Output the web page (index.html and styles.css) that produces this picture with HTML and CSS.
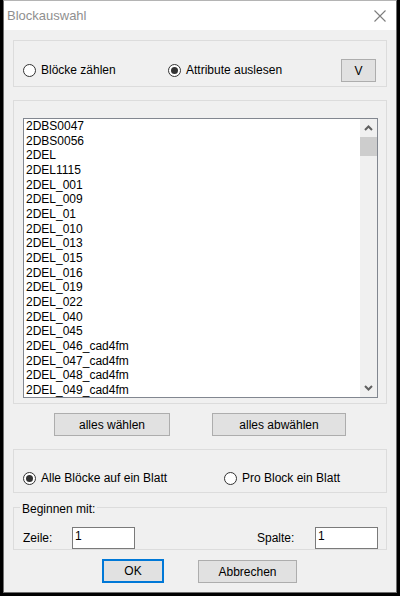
FILE: index.html
```html
<!DOCTYPE html>
<html lang="de">
<head>
<meta charset="utf-8">
<title>Blockauswahl</title>
<link rel="stylesheet" href="styles.css">
</head>
<body>
<div class="window">
  <div class="titlebar">
    <span class="title">Blockauswahl</span>
    <svg class="close" width="12" height="12" viewBox="0 0 12 12"><path d="M0.5 0.5 L11.5 11.5 M11.5 0.5 L0.5 11.5" stroke="#7d7d7d" stroke-width="1.1" fill="none"/></svg>
  </div>
  <div class="content">
    <div class="group g1">
      <label class="radio"><span class="circle"></span>Blöcke zählen</label>
      <label class="radio"><span class="circle checked"></span>Attribute auslesen</label>
      <button class="btn btn-v">V</button>
    </div>
    <div class="group g2">
      <div class="listbox">
        <ul class="items">
          <li>2DBS0047</li>
          <li>2DBS0056</li>
          <li>2DEL</li>
          <li>2DEL1115</li>
          <li>2DEL_001</li>
          <li>2DEL_009</li>
          <li>2DEL_01</li>
          <li>2DEL_010</li>
          <li>2DEL_013</li>
          <li>2DEL_015</li>
          <li>2DEL_016</li>
          <li>2DEL_019</li>
          <li>2DEL_022</li>
          <li>2DEL_040</li>
          <li>2DEL_045</li>
          <li>2DEL_046_cad4fm</li>
          <li>2DEL_047_cad4fm</li>
          <li>2DEL_048_cad4fm</li>
          <li>2DEL_049_cad4fm</li>
        </ul>
        <div class="scrollbar">
          <div class="sb-btn"><svg width="9" height="6" viewBox="0 0 9 6"><path d="M1 5 L4.5 1.5 L8 5" stroke="#606060" stroke-width="2" fill="none"/></svg></div>
          <div class="thumb"></div>
          <div class="track"></div>
          <div class="sb-btn"><svg width="9" height="6" viewBox="0 0 9 6"><path d="M1 1 L4.5 4.5 L8 1" stroke="#606060" stroke-width="2" fill="none"/></svg></div>
        </div>
      </div>
    </div>
    <div class="btnrow">
      <button class="btn btn-all">alles wählen</button>
      <button class="btn btn-none">alles abwählen</button>
    </div>
    <div class="group g3">
      <label class="radio r-all"><span class="circle checked"></span>Alle Blöcke auf ein Blatt</label>
      <label class="radio"><span class="circle"></span>Pro Block ein Blatt</label>
    </div>
    <fieldset class="group g4">
      <legend>Beginnen mit:</legend>
      <div class="fields">
        <span class="lbl lbl-zeile">Zeile:</span>
        <input class="txt" type="text" value="1">
        <span class="spacer"></span>
        <span class="lbl lbl-spalte">Spalte:</span>
        <input class="txt" type="text" value="1">
      </div>
    </fieldset>
    <div class="dlgbtns">
      <button class="btn btn-ok">OK</button>
      <button class="btn btn-cancel">Abbrechen</button>
    </div>
  </div>
</div>
</body>
</html>
```
FILE: styles.css
```css
* { box-sizing: border-box; }
html, body { margin: 0; padding: 0; }
body {
  background: #000;
  width: 400px;
  height: 596px;
  overflow: hidden;
  font-family: "Liberation Sans", Arial, sans-serif;
  font-size: 12px;
  color: #000;
}
.window {
  margin-left: 3px;
  width: 394px;
  height: 593px;
  background: #f0f0f0;
  border: 1px solid #6f6f6f;
  border-top-color: #b4b4b4;
  display: flex;
  flex-direction: column;
}
.titlebar {
  height: 29px;
  background: #fff;
  display: flex;
  align-items: center;
  justify-content: space-between;
  padding: 0 10px 1px 3px;
}
.title {
  font-size: 13px;
  color: #8f8f8f;
}
.close { display: block; margin-top: 2px; }
.content {
  padding: 10px 9px 0 9px;
  display: flex;
  flex-direction: column;
}
.group {
  border: 1px solid #dcdcdc;
  margin: 0;
}
.g1 {
  height: 47px;
  padding: 18px 10px 4px 9px;
  display: grid;
  grid-template-columns: 145px 1fr 35px;
  align-items: center;
}
.radio {
  display: inline-flex;
  align-items: center;
  gap: 5px;
  line-height: 15px;
  white-space: nowrap;
}
.circle {
  width: 13px;
  height: 13px;
  border-radius: 50%;
  border: 1px solid #333;
  background: #fff;
  display: inline-flex;
  align-items: center;
  justify-content: center;
  flex: none;
}
.circle.checked::after {
  content: "";
  width: 7px;
  height: 7px;
  border-radius: 50%;
  background: #333;
}
.btn {
  font-family: "Liberation Sans", Arial, sans-serif;
  font-size: 12px;
  color: #000;
  background: #e1e1e1;
  border: 1px solid #adadad;
  padding: 0;
  margin: 0;
}
.btn-v { width: 35px; height: 23px; }
.g2 {
  height: 304px;
  margin-top: 13px;
  padding: 17px 8px 5px 9px;
}
.listbox {
  height: 280px;
  border: 1px solid #828790;
  background: #fff;
  display: flex;
  overflow: hidden;
}
.items {
  list-style: none;
  margin: 0;
  padding: 0 0 0 2px;
  flex: 1;
  overflow: hidden;
}
.items li {
  line-height: 14.68px;
  height: 14.68px;
  white-space: nowrap;
}
.scrollbar {
  width: 17px;
  background: #f0f0f0;
  display: flex;
  flex-direction: column;
}
.sb-btn {
  height: 18px;
  display: flex;
  align-items: center;
  justify-content: center;
}
.sb-btn svg { display: block; }
.thumb { height: 19px; background: #cdcdcd; }
.track { flex: 1; }
.btnrow {
  margin-top: 9px;
  display: flex;
  gap: 42px;
  padding-left: 41px;
}
.btn-all { width: 116px; height: 23px; }
.btn-none { width: 134px; height: 23px; }
.g3 {
  height: 44px;
  margin-top: 13px;
  padding: 21px 9px 6px 9px;
  display: grid;
  grid-template-columns: 201px 1fr;
  align-items: center;
}
.g4 {
  margin-top: 4px;
  padding: 10px 8px 0 9px;
  min-width: 0;
}
.g4 legend {
  padding: 5px 2px 0 2px;
  margin-left: -3px;
  line-height: 15px;
}
.fields {
  display: flex;
  align-items: center;
  height: 22px;
}
.lbl { line-height: 15px; padding-top: 1px; }
.lbl-zeile { width: 49px; }
.lbl-spalte { width: 58px; }
.spacer { flex: 1; }
.txt {
  width: 63px;
  height: 22px;
  border: 1px solid #7a7a7a;
  background: #fff;
  font-family: "Liberation Sans", Arial, sans-serif;
  font-size: 12px;
  color: #000;
  padding: 0 2px 4px 2px;
  margin: 0;
  outline: none;
}
.dlgbtns {
  margin-top: 9px;
  display: flex;
  align-items: flex-end;
  padding-left: 89px;
  gap: 34px;
}
.btn-ok {
  width: 62px;
  height: 24px;
  border: 2px solid #0078d7;
}
.btn-cancel { width: 99px; height: 23px; }
```
